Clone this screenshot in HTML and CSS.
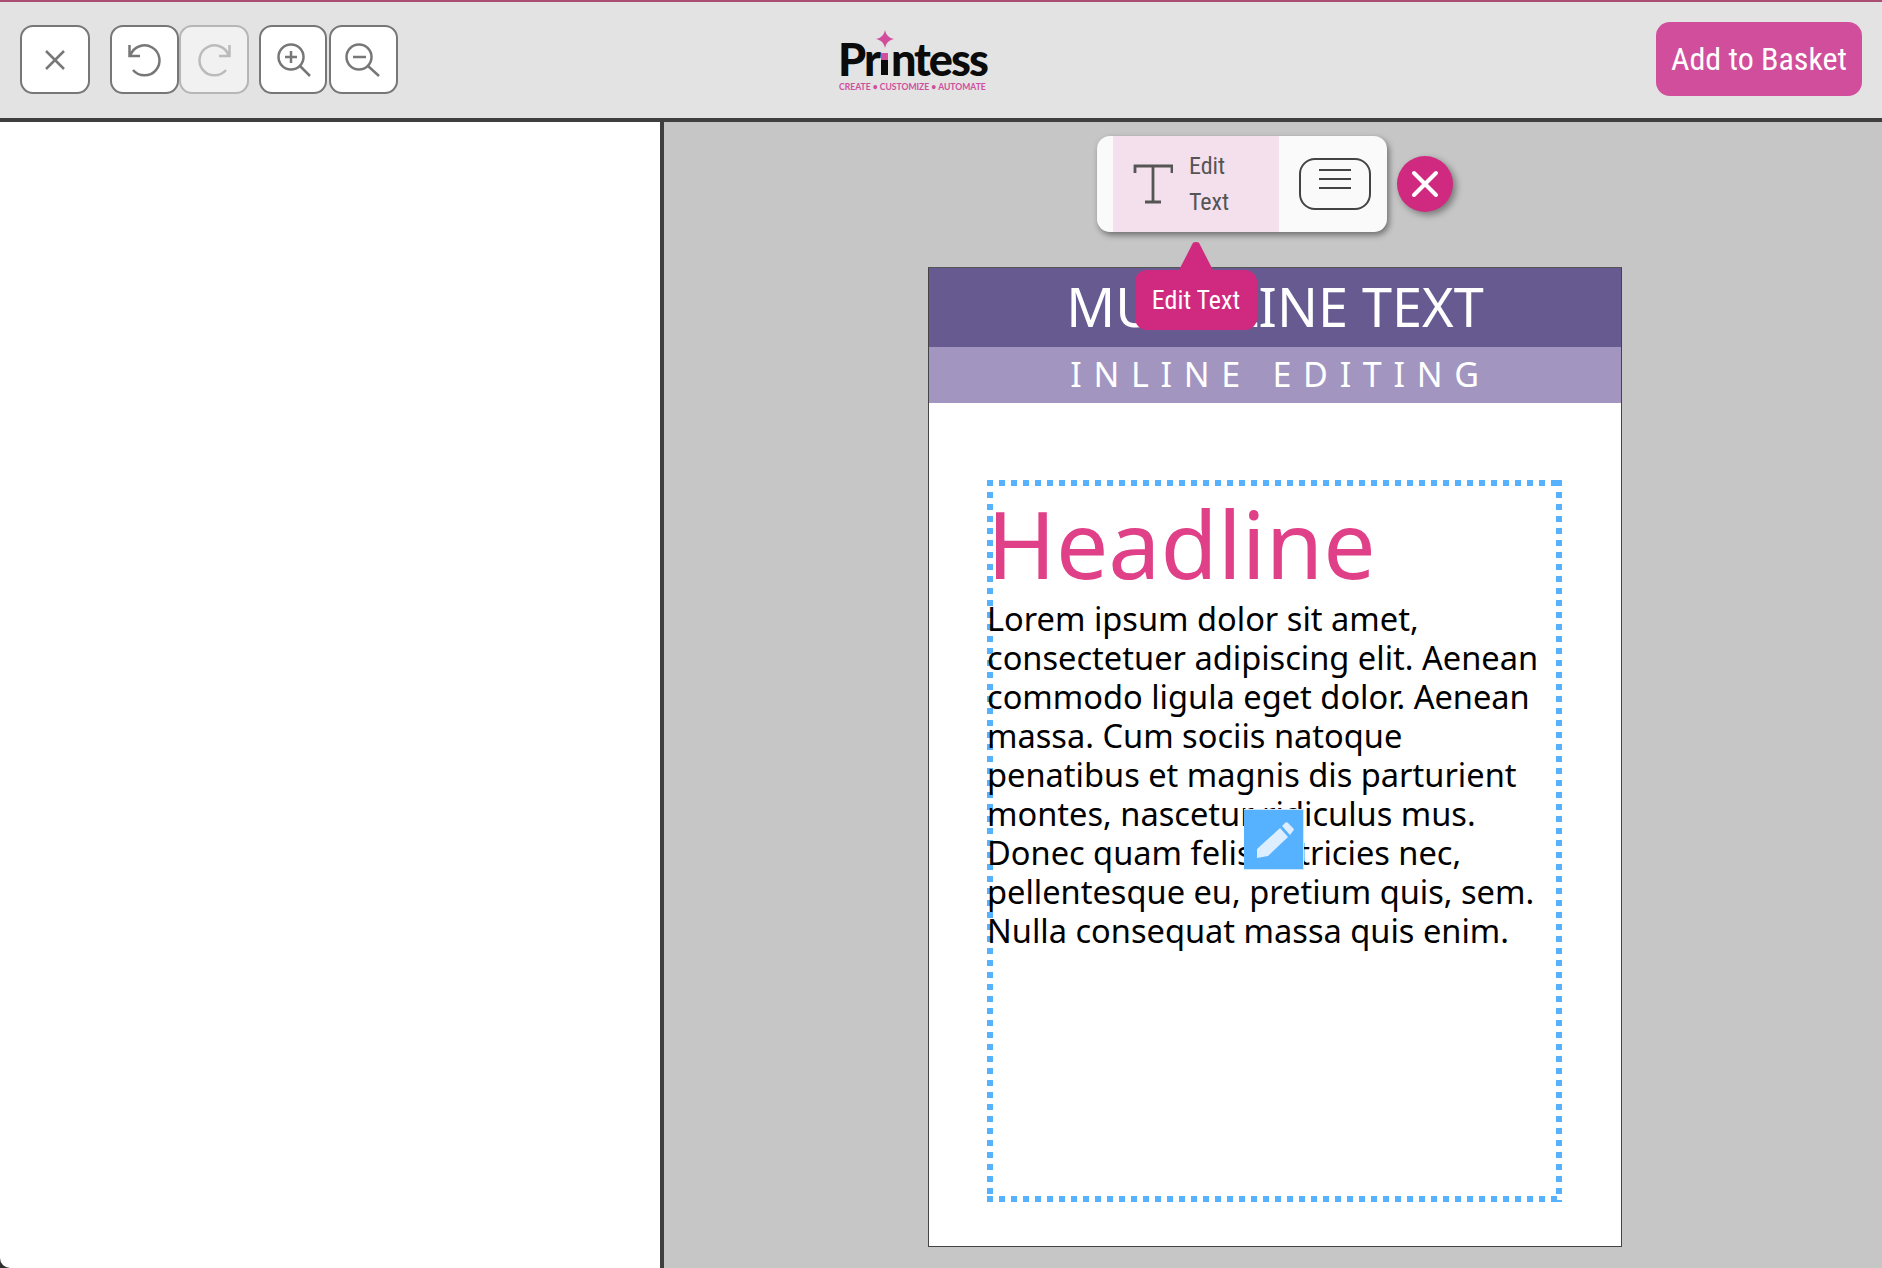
FILE: index.html
```html
<!DOCTYPE html>
<html lang="en">
<head>
<meta charset="utf-8">
<title>Printess</title>
<link rel="stylesheet" href="styles.css">
</head>
<body>
<div class="app">
  <header class="topbar">
    <button class="tool tool-close" aria-label="Close">
      <svg width="66" height="65" viewBox="0 0 66 65"><path class="ico" d="M24 24 42 42M42 24 24 42"/></svg>
    </button>
    <div class="group group-history">
      <button class="tool tool-undo" aria-label="Undo">
        <svg width="65" height="65" viewBox="0 0 65 65"><path class="ico" d="M17.500 18V29H28M18.500 28A15 15 0 1 1 21 43"/></svg>
      </button>
      <button class="tool tool-off" aria-label="Redo">
        <svg width="66" height="65" viewBox="0 0 66 65"><path class="ico" d="M48.500 18V29H38M47.500 28A15 15 0 1 0 45 43"/></svg>
      </button>
    </div>
    <div class="group group-zoom">
      <button class="tool" aria-label="Zoom in">
        <svg width="64" height="65" viewBox="0 0 64 65"><circle class="ico" cx="30" cy="30" r="12.500"/><path class="ico" d="M39 39 49 49M24 30H36M30 24V36"/></svg>
      </button>
      <button class="tool" aria-label="Zoom out">
        <svg width="65" height="65" viewBox="0 0 65 65"><circle class="ico" cx="28" cy="30" r="12.500"/><path class="ico" d="M37 39 48 49M22 30H35"/></svg>
      </button>
    </div>
    <div class="logo">
      <svg class="logo-star" width="18" height="18" viewBox="0 0 18 18"><path d="M9 0C10 5 13 8 18 9 13 10 10 13 9 18 8 13 5 10 0 9 5 8 8 5 9 0Z"/></svg>
      <div class="logo-word">Pr<span class="logo-i"></span>ntess</div>
      <div class="logo-tag">CREATE • CUSTOMIZE • AUTOMATE</div>
    </div>
    <button class="basket">Add to Basket</button>
  </header>
  <main class="workspace">
    <aside class="sidepanel"></aside>
    <section class="canvas">
      <div class="toolbar">
        <div class="tb-active">
          <svg width="40" height="40" viewBox="0 0 40 40"><path class="ico-t" d="M2 9V2H39V9M20 2V38M12 38H28"/></svg>
          <div class="tb-label">Edit<br>Text</div>
        </div>
        <button class="tb-menu" aria-label="Menu">
          <svg width="32" height="20" viewBox="0 0 32 20"><path class="ico-m" d="M0 1H32M0 10H32M0 19H32"/></svg>
        </button>
      </div>
      <button class="close-fab" aria-label="Close">
        <svg width="28" height="28" viewBox="0 0 28 28"><path d="M3 3 25 25M25 3 3 25"/></svg>
      </button>
      <div class="tooltip">Edit Text</div>
      <article class="doc">
        <div class="doc-title">MULTILINE TEXT</div>
        <div class="doc-sub">INLINE EDITING</div>
        <div class="frame">
          <h1 class="headline">Headline</h1>
          <p class="body-copy">Lorem ipsum dolor sit amet,<br>consectetuer adipiscing elit. Aenean<br>commodo ligula eget dolor. Aenean<br>massa. Cum sociis natoque<br>penatibus et magnis dis parturient<br>montes, nascetur ridiculus mus.<br>Donec quam felis, ultricies nec,<br>pellentesque eu, pretium quis, sem.<br>Nulla consequat massa quis enim.</p>
          <div class="pencil">
            <svg width="60" height="60" viewBox="0 0 60 60"><path d="M13 39 36 18 44 27 24 46 13 48ZM38 16 41 13C42 12 43 12 44 13L49 18C50 19 50 20 49 21L46 25Z"/></svg>
          </div>
        </div>
      </article>
    </section>
  </main>
</div>
</body>
</html>
```

FILE: styles.css
```css
* { box-sizing: border-box; }
html, body { margin: 0; height: 100%; overflow: hidden; }
body { background: #2e2e2e; font-family: "Roboto", "Liberation Sans", sans-serif; }
button { padding: 0; font: inherit; cursor: pointer; }

.app { display: flex; flex-direction: column; height: 1268px; }

.topbar {
  display: flex;
  align-items: center;
  flex: none;
  height: 122px;
  padding: 0 20px 1px;
  background: #e3e3e3;
  border-top: 2px solid #ab4e74;
  border-bottom: 4px solid #3f3f3f;
}
.group { display: flex; }
.group-history { margin-left: 20px; }
.group-zoom { margin-left: 10px; gap: 2px; }

.tool {
  display: flex;
  align-items: center;
  justify-content: center;
  width: 70px;
  height: 69px;
  background: #fff;
  border: 2px solid #777;
  border-radius: 13px;
}
.tool-undo { width: 69px; }
.group-zoom .tool { width: 68px; }
.group-zoom .tool + .tool { width: 69px; }
.tool-off { background: #f1f1f1; border-color: #b6b6b6; }
.tool-off .ico { stroke: #bbb; }
.ico { fill: none; stroke: #777; stroke-width: 2.500; }

.logo {
  position: relative;
  margin-left: 441px;
  width: 148px;
  height: 60px;
}
.logo-star { position: absolute; left: 37px; top: 0; fill: #d14e9c; }
.logo-word {
  position: absolute;
  left: -1px;
  top: 2px;
  display: flex;
  align-items: flex-end;
  font-family: "Lato", sans-serif;
  font-weight: 900;
  font-size: 45px;
  line-height: 54px;
  letter-spacing: -2px;
  color: #0b0b0b;
}
.logo-i {
  display: block;
  width: 7px;
  height: 22px;
  margin: 0 3px 11px 2px;
  background: linear-gradient(#d14e9c 0 7px, #0b0b0b 7px);
}
.logo-tag {
  position: absolute;
  left: 0;
  bottom: -2px;
  width: 148px;
  font-family: "Lato", sans-serif;
  font-weight: 700;
  font-size: 8.600px;
  line-height: 9px;
  white-space: nowrap;
  color: #d14e9c;
}

.basket {
  margin-left: auto;
  margin-bottom: 1px;
  width: 206px;
  height: 74px;
  border: 0;
  border-radius: 14px;
  background: #d14e9c;
  color: #fff;
  font-family: "Roboto", sans-serif;
  font-stretch: 75%;
  font-size: 32px;
  font-weight: 450;
}

.workspace { display: flex; flex: 1; min-height: 0; }
.sidepanel {
  flex: none;
  width: 664px;
  background: #fff;
  border-right: 4px solid #3f3f3f;
  border-bottom-left-radius: 10px;
}
.canvas { position: relative; flex: 1; background: #c6c6c6; padding: 145px 260px 0 264px; }

.toolbar {
  position: absolute;
  left: 433px;
  top: 14px;
  display: flex;
  align-items: center;
  width: 290px;
  height: 96px;
  padding-left: 16px;
  background: #fafafa;
  border-radius: 13px;
  box-shadow: 2px 3px 6px rgba(0, 0, 0, .45);
}
.tb-active {
  display: flex;
  align-items: center;
  width: 166px;
  height: 96px;
  padding-left: 20px;
  gap: 16px;
  background: #f4e0ed;
}
.ico-t { fill: none; stroke: #555; stroke-width: 2.800; }
.tb-label {
  font-stretch: 75%;
  font-size: 24px;
  line-height: 36px;
  color: #555;
}
.tb-menu {
  display: flex;
  align-items: center;
  justify-content: center;
  width: 72px;
  height: 52px;
  margin-left: 20px;
  padding-bottom: 10px;
  background: transparent;
  border: 2px solid #444;
  border-radius: 16px;
}
.ico-m { fill: none; stroke: #444; stroke-width: 2; }

.close-fab {
  position: absolute;
  left: 733px;
  top: 34px;
  display: flex;
  align-items: center;
  justify-content: center;
  width: 56px;
  height: 56px;
  border: 0;
  border-radius: 50%;
  background: #cf2a80;
  box-shadow: 3px 3px 7px rgba(0, 0, 0, .4);
}
.close-fab path { fill: none; stroke: #fff; stroke-width: 4; stroke-linecap: round; }

.tooltip {
  position: absolute;
  z-index: 2;
  left: 471px;
  top: 148px;
  width: 122px;
  height: 60px;
  border-radius: 12px;
  background: #cf2a80;
  color: #fff;
  font-stretch: 75%;
  font-size: 26px;
  font-weight: 450;
  line-height: 60px;
  text-align: center;
}
.tooltip::before {
  content: "";
  position: absolute;
  left: 43px;
  top: -28px;
  width: 36px;
  height: 30px;
  background: #cf2a80;
  clip-path: polygon(50% 0, 58% 2%, 100% 100%, 0 100%, 42% 2%);
}

.doc {
  display: flex;
  flex-direction: column;
  width: 694px;
  height: 980px;
  background: #fff;
  border: 1px solid #444;
  border-top-color: #555;
  font-family: "Noto Sans", sans-serif;
}
.doc-title {
  height: 79px;
  background: #665a91;
  color: #fff;
  font-size: 54px;
  line-height: 76px;
  text-align: center;
}
.doc-sub {
  height: 56px;
  padding-left: 11px;
  background: #a296c1;
  color: #fff;
  font-size: 34px;
  line-height: 54px;
  letter-spacing: 11.700px;
  text-align: center;
}
.frame {
  position: relative;
  width: 575px;
  height: 722px;
  margin: 77px 0 0 58px;
  --dot: #56b2ff;
  background:
    linear-gradient(to right, var(--dot) 50%, transparent 50%) 0 0 / 12px 6px repeat-x,
    linear-gradient(to right, var(--dot) 50%, transparent 50%) 0 100% / 12px 6px repeat-x,
    linear-gradient(to bottom, var(--dot) 50%, transparent 50%) 0 0 / 6px 12px repeat-y,
    linear-gradient(to bottom, var(--dot) 50%, transparent 50%) 100% 0 / 6px 12px repeat-y;
}
.headline {
  margin: 0;
  padding-top: 8px;
  font-size: 93px;
  font-weight: 400;
  line-height: 111px;
  color: #e04087;
}
.body-copy {
  margin: 0;
  font-size: 32.600px;
  line-height: 39px;
  color: #000;
  white-space: nowrap;
}
.pencil {
  position: absolute;
  left: 257px;
  top: 329px;
  width: 60px;
  height: 61px;
  background: #56b2ff;
  border: 1px solid #cfe6fb;
  border-left: 0;
}
.pencil svg { display: block; fill: #dceeff; }
```
